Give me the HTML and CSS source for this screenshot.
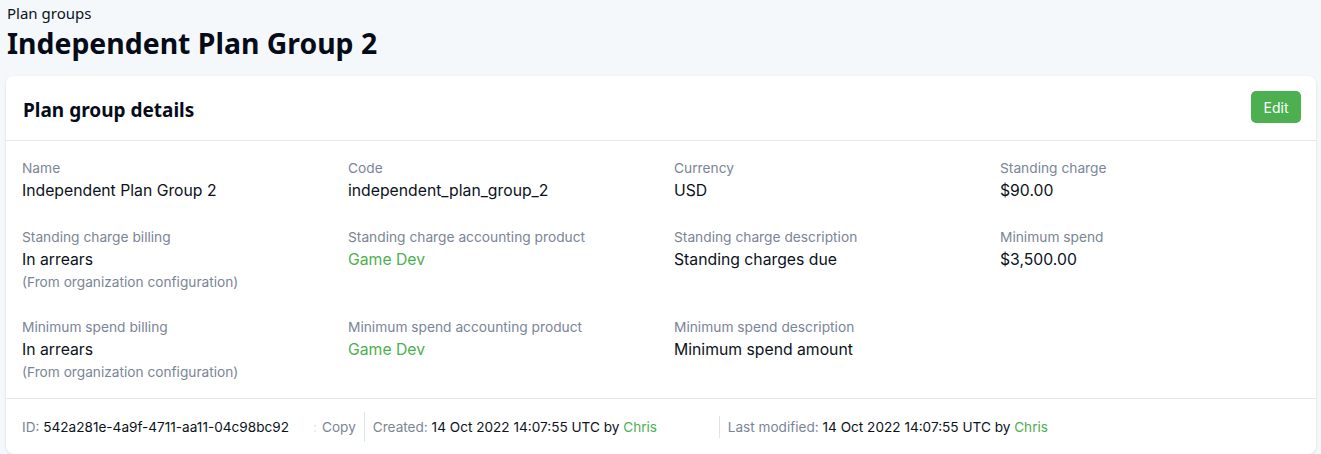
FILE: index.html
```html
<!DOCTYPE html>
<html>
<head>
<meta charset="utf-8">
<link rel="stylesheet" href="styles.css">
</head>
<body>
<div class="page">
  <div class="crumb">Plan groups</div>
  <h1 class="title">Independent Plan Group 2</h1>
  <div class="card">
    <div class="card-head">
      <h2 class="card-title">Plan group details</h2>
      <button class="btn-edit">Edit</button>
    </div>
    <div class="grid">
      <div class="field"><div class="label">Name</div><div class="value">Independent Plan Group 2</div></div>
      <div class="field"><div class="label">Code</div><div class="value">independent_plan_group_2</div></div>
      <div class="field"><div class="label">Currency</div><div class="value">USD</div></div>
      <div class="field"><div class="label">Standing charge</div><div class="value">$90.00</div></div>

      <div class="field"><div class="label">Standing charge billing</div><div class="value">In arrears</div><div class="sub">(From organization configuration)</div></div>
      <div class="field"><div class="label">Standing charge accounting product</div><div class="value link">Game Dev</div></div>
      <div class="field"><div class="label">Standing charge description</div><div class="value">Standing charges due</div></div>
      <div class="field"><div class="label">Minimum spend</div><div class="value">$3,500.00</div></div>

      <div class="field"><div class="label">Minimum spend billing</div><div class="value">In arrears</div><div class="sub">(From organization configuration)</div></div>
      <div class="field"><div class="label">Minimum spend accounting product</div><div class="value link">Game Dev</div></div>
      <div class="field"><div class="label">Minimum spend description</div><div class="value">Minimum spend amount</div></div>
      <div class="field"></div>
    </div>
    <div class="card-foot">
      <div class="meta meta-id"><span class="mlabel">ID:</span> <span class="mval">542a281e-4a9f-4711-aa11-04c98bc92</span></div>
      <span class="dot">:</span>
      <span class="copy">Copy</span>
      <div class="meta meta-created"><span class="mlabel">Created:</span> <span class="mval">14 Oct 2022 14:07:55 UTC by</span> <span class="link">Chris</span></div>
      <div class="meta meta-mod"><span class="mlabel">Last modified:</span> <span class="mval">14 Oct 2022 14:07:55 UTC by</span> <span class="link">Chris</span></div>
    </div>
  </div>
</div>
</body>
</html>
```
FILE: styles.css
```css
* { box-sizing: border-box; }
html, body { margin: 0; padding: 0; }
body {
  background: #f5f8fb;
  font-family: Inter, "Noto Sans", sans-serif;
  color: #0b1220;
}
.page { padding: 3px 5px 0 6px; }
.crumb {
  font-family: "Noto Sans", sans-serif;
  font-size: 15px;
  line-height: 20px;
  padding-left: 1px;
  color: #0b1220;
}
.title {
  font-family: "Noto Sans", sans-serif;
  font-weight: 700;
  font-size: 28.4px;
  line-height: 40px;
  margin: 0 0 13px 0;
  padding-left: 1px;
  color: #050b18;
}
.card {
  background: #fff;
  border-radius: 8px;
  box-shadow: 0 1px 3px rgba(20, 40, 80, 0.12);
}
.card-head {
  display: flex;
  align-items: center;
  justify-content: space-between;
  height: 65px;
  padding: 0 15px 0 17px;
  border-bottom: 1px solid #e3e8ef;
}
.card-title {
  font-family: "Noto Sans", sans-serif;
  font-weight: 700;
  font-size: 19px;
  margin: 0;
  padding-top: 4px;
  color: #050b18;
}
.btn-edit {
  background: #4caf50;
  color: #fff;
  border: none;
  border-radius: 5px;
  width: 50px;
  height: 32px;
  margin-bottom: 2px;
  font-family: Inter, sans-serif;
  font-size: 14px;
  padding: 0;
}
.grid {
  display: grid;
  grid-template-columns: repeat(4, 300px);
  column-gap: 26px;
  row-gap: 25px;
  padding: 17px 16px 16px 16px;
  border-bottom: 1px solid #e3e8ef;
}
.label {
  font-size: 13.75px;
  line-height: 20px;
  color: #7b8597;
}
.value {
  font-size: 15.75px;
  line-height: 22px;
  margin-top: 2px;
  color: #0b1220;
}
.sub {
  font-size: 13.7px;
  line-height: 20px;
  margin-top: 1px;
  color: #7b8597;
}
.link { color: #4caf50; }
.card-foot {
  display: flex;
  align-items: center;
  height: 55px;
  padding: 1px 16px 0 16px;
  font-size: 13.6px;
}
.mlabel { color: #7b8597; }
.mval { color: #0b1220; }
.meta-id { width: 291px; }
.dot { color: #cfe3f0; width: 9px; }
.copy {
  color: #7b8597;
  padding-right: 8px;
  border-right: 1px solid #dde3ea;
  line-height: 30px;
}
.meta-created {
  width: 355px;
  padding-left: 8px;
  border-right: 1px solid #dde3ea;
  line-height: 22px;
}
.meta-mod { padding-left: 8px; }
```
